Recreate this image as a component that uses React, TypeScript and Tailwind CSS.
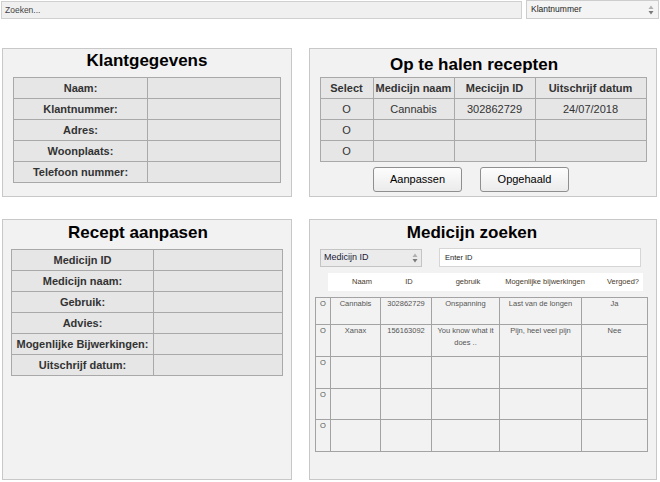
import React from "react";

const klantRows = ["Naam:", "Klantnummer:", "Adres:", "Woonplaats:", "Telefoon nummer:"];
const receptRows = [
  "Medicijn ID",
  "Medicijn naam:",
  "Gebruik:",
  "Advies:",
  "Mogenlijke Bijwerkingen:",
  "Uitschrijf datum:",
];

const ophalen = [
  ["O", "Cannabis", "302862729", "24/07/2018"],
  ["O", "", "", ""],
  ["O", "", "", ""],
];

const medicijnen = [
  { h: "h-[27px]", cells: ["O", "Cannabis", "302862729", "Onspanning", "Last van de longen", "Ja"] },
  { h: "h-[32px]", cells: ["O", "Xanax", "156163092", "You know what it does ..", "Pijn, heel veel pijn", "Nee"] },
  { h: "h-[32px]", cells: ["O", "", "", "", "", ""] },
  { h: "h-[31px]", cells: ["O", "", "", "", "", ""] },
  { h: "h-[32px]", cells: ["O", "", "", "", "", ""] },
];

function Arrows() {
  return (
    <svg width="6" height="10" viewBox="0 0 6 10" className="shrink-0">
      <path d="M3 0.5 L5.5 4 L0.5 4 Z" fill="#b0b0b0" />
      <path d="M3 9.5 L5.5 6 L0.5 6 Z" fill="#7a7a7a" />
    </svg>
  );
}

function LabelTable({ rows, cols }: { rows: string[]; cols: string }) {
  return (
    <div className={`grid ${cols} border-l border-t border-[#a9a9a9] bg-[#e6e6e6]`}>
      {rows.map((label) => (
        <React.Fragment key={label}>
          <div className="h-[21px] border-r border-b border-[#a9a9a9] flex items-center justify-center text-[11px] font-bold text-[#333] whitespace-nowrap">
            {label}
          </div>
          <div className="h-[21px] border-r border-b border-[#a9a9a9]" />
        </React.Fragment>
      ))}
    </div>
  );
}

function Panel({
  title,
  pt,
  titleShift = "",
  children,
}: {
  title: string;
  pt: string;
  titleShift?: string;
  children: React.ReactNode;
}) {
  return (
    <div className={`border border-[#c8c8c8] bg-[#f2f2f2] flex flex-col items-center ${pt}`}>
      <div className={`text-[17px] leading-[22px] font-bold text-black ${titleShift}`}>{title}</div>
      {children}
    </div>
  );
}

export default function App() {
  return (
    <div className="w-[660px] h-[482px] bg-white overflow-hidden font-['Liberation_Sans',Arial,sans-serif] text-black">
      {/* top search bar */}
      <div className="flex items-start h-[19px]">
        <div className="mt-[1px] ml-[1px] w-[521px] h-[18px] bg-[#f0f0f0] border border-[#d0d0d0] flex items-center px-[3px] text-[8.5px] text-[#444]">
          Zoeken...
        </div>
        <div className="ml-[4px] w-[133px] h-[19px] bg-[#f4f4f4] border border-[#cdcdcd] flex items-center justify-between pl-[4px] pr-[4px] text-[8.5px] text-[#222]">
          <span>Klantnummer</span>
          <Arrows />
        </div>
      </div>

      <div className="grid grid-cols-[290px_348px] grid-rows-[149px_261px] gap-x-[17px] gap-y-[22px] mt-[29px] ml-[2px]">
        {/* Klantgegevens */}
        <Panel title="Klantgegevens" pt="pt-[1px]">
          <div className="mt-[5px] w-[268px]">
            <LabelTable rows={klantRows} cols="grid-cols-[134px_133px]" />
          </div>
        </Panel>

        {/* Op te halen recepten */}
        <Panel title="Op te halen recepten" pt="pt-[5px]" titleShift="mr-[18px]">
          <div className="mt-[1px] w-[327px] grid grid-cols-[53px_81px_81px_111px] border-l border-t border-[#a9a9a9] bg-[#e6e6e6] text-[11px] text-[#333]">
            {["Select", "Medicijn naam", "Mecicijn ID", "Uitschrijf datum"].map((h) => (
              <div key={h} className="h-[21px] border-r border-b border-[#a9a9a9] flex items-center justify-center font-bold whitespace-nowrap">
                {h}
              </div>
            ))}
            {ophalen.map((row, i) =>
              row.map((c, j) => (
                <div key={`${i}-${j}`} className="h-[21px] border-r border-b border-[#a9a9a9] flex items-center justify-center whitespace-nowrap">
                  {c}
                </div>
              ))
            )}
          </div>
          <div className="self-start ml-[63px] mt-[5px] flex gap-[18px]">
            {["Aanpassen", "Opgehaald"].map((b) => (
              <button
                key={b}
                className="w-[89px] h-[25px] rounded-[3px] border border-[#8f8f8f] bg-linear-to-b from-[#fdfdfd] to-[#ebebeb] text-[11px] text-black"
              >
                {b}
              </button>
            ))}
          </div>
        </Panel>

        {/* Recept aanpasen */}
        <Panel title="Recept aanpasen" pt="pt-[2px]" titleShift="mr-[18px]">
          <div className="mt-[5px] w-[272px]">
            <LabelTable rows={receptRows} cols="grid-cols-[142px_129px]" />
          </div>
        </Panel>

        {/* Medicijn zoeken */}
        <div className="border border-[#c8c8c8] bg-[#f2f2f2] flex flex-col items-start pt-[2px]">
          <div className="self-center mr-[22px] text-[17px] leading-[22px] font-bold text-black">Medicijn zoeken</div>
          <div className="mt-[4px] ml-[10px] flex items-start">
            <div className="mt-[1px] w-[102px] h-[18px] bg-[#ebebeb] border border-[#c4c4c4] flex items-center justify-between pl-[3px] pr-[3px] text-[9px] text-[#1a1a3a]">
              <span>Medicijn ID</span>
              <Arrows />
            </div>
            <div className="ml-[17px] w-[202px] h-[19px] bg-white border border-[#d6d6d6] flex items-center pl-[5px] text-[7.5px] text-[#222]">
              Enter ID
            </div>
          </div>
          <div className="mt-[6px] ml-[18px] w-[315px] h-[18px] bg-white flex items-center text-[7.5px] text-[#4a3a2a] whitespace-nowrap">
            <span className="w-[68px] flex justify-center">Naam</span>
            <span className="w-[26px] flex justify-center">ID</span>
            <span className="w-[92px] flex justify-center">gebruik</span>
            <span className="w-[62px] flex justify-center">Mogenlijke bijwerkingen</span>
            <span className="flex-1 flex justify-end pr-[4px]">Vergoed?</span>
          </div>
          <div className="mt-[6px] ml-[5px] w-[333px] grid grid-cols-[15px_50px_51px_68px_82px_66px] border-l border-t border-[#a3a3a3] text-[7.5px] leading-[12px] text-[#555]">
            {medicijnen.map((row, i) =>
              row.cells.map((c, j) => (
                <div key={`${i}-${j}`} className={`${row.h} border-r border-b border-[#a3a3a3] text-center px-[2px]`}>
                  {c}
                </div>
              ))
            )}
          </div>
        </div>
      </div>
    </div>
  );
}
